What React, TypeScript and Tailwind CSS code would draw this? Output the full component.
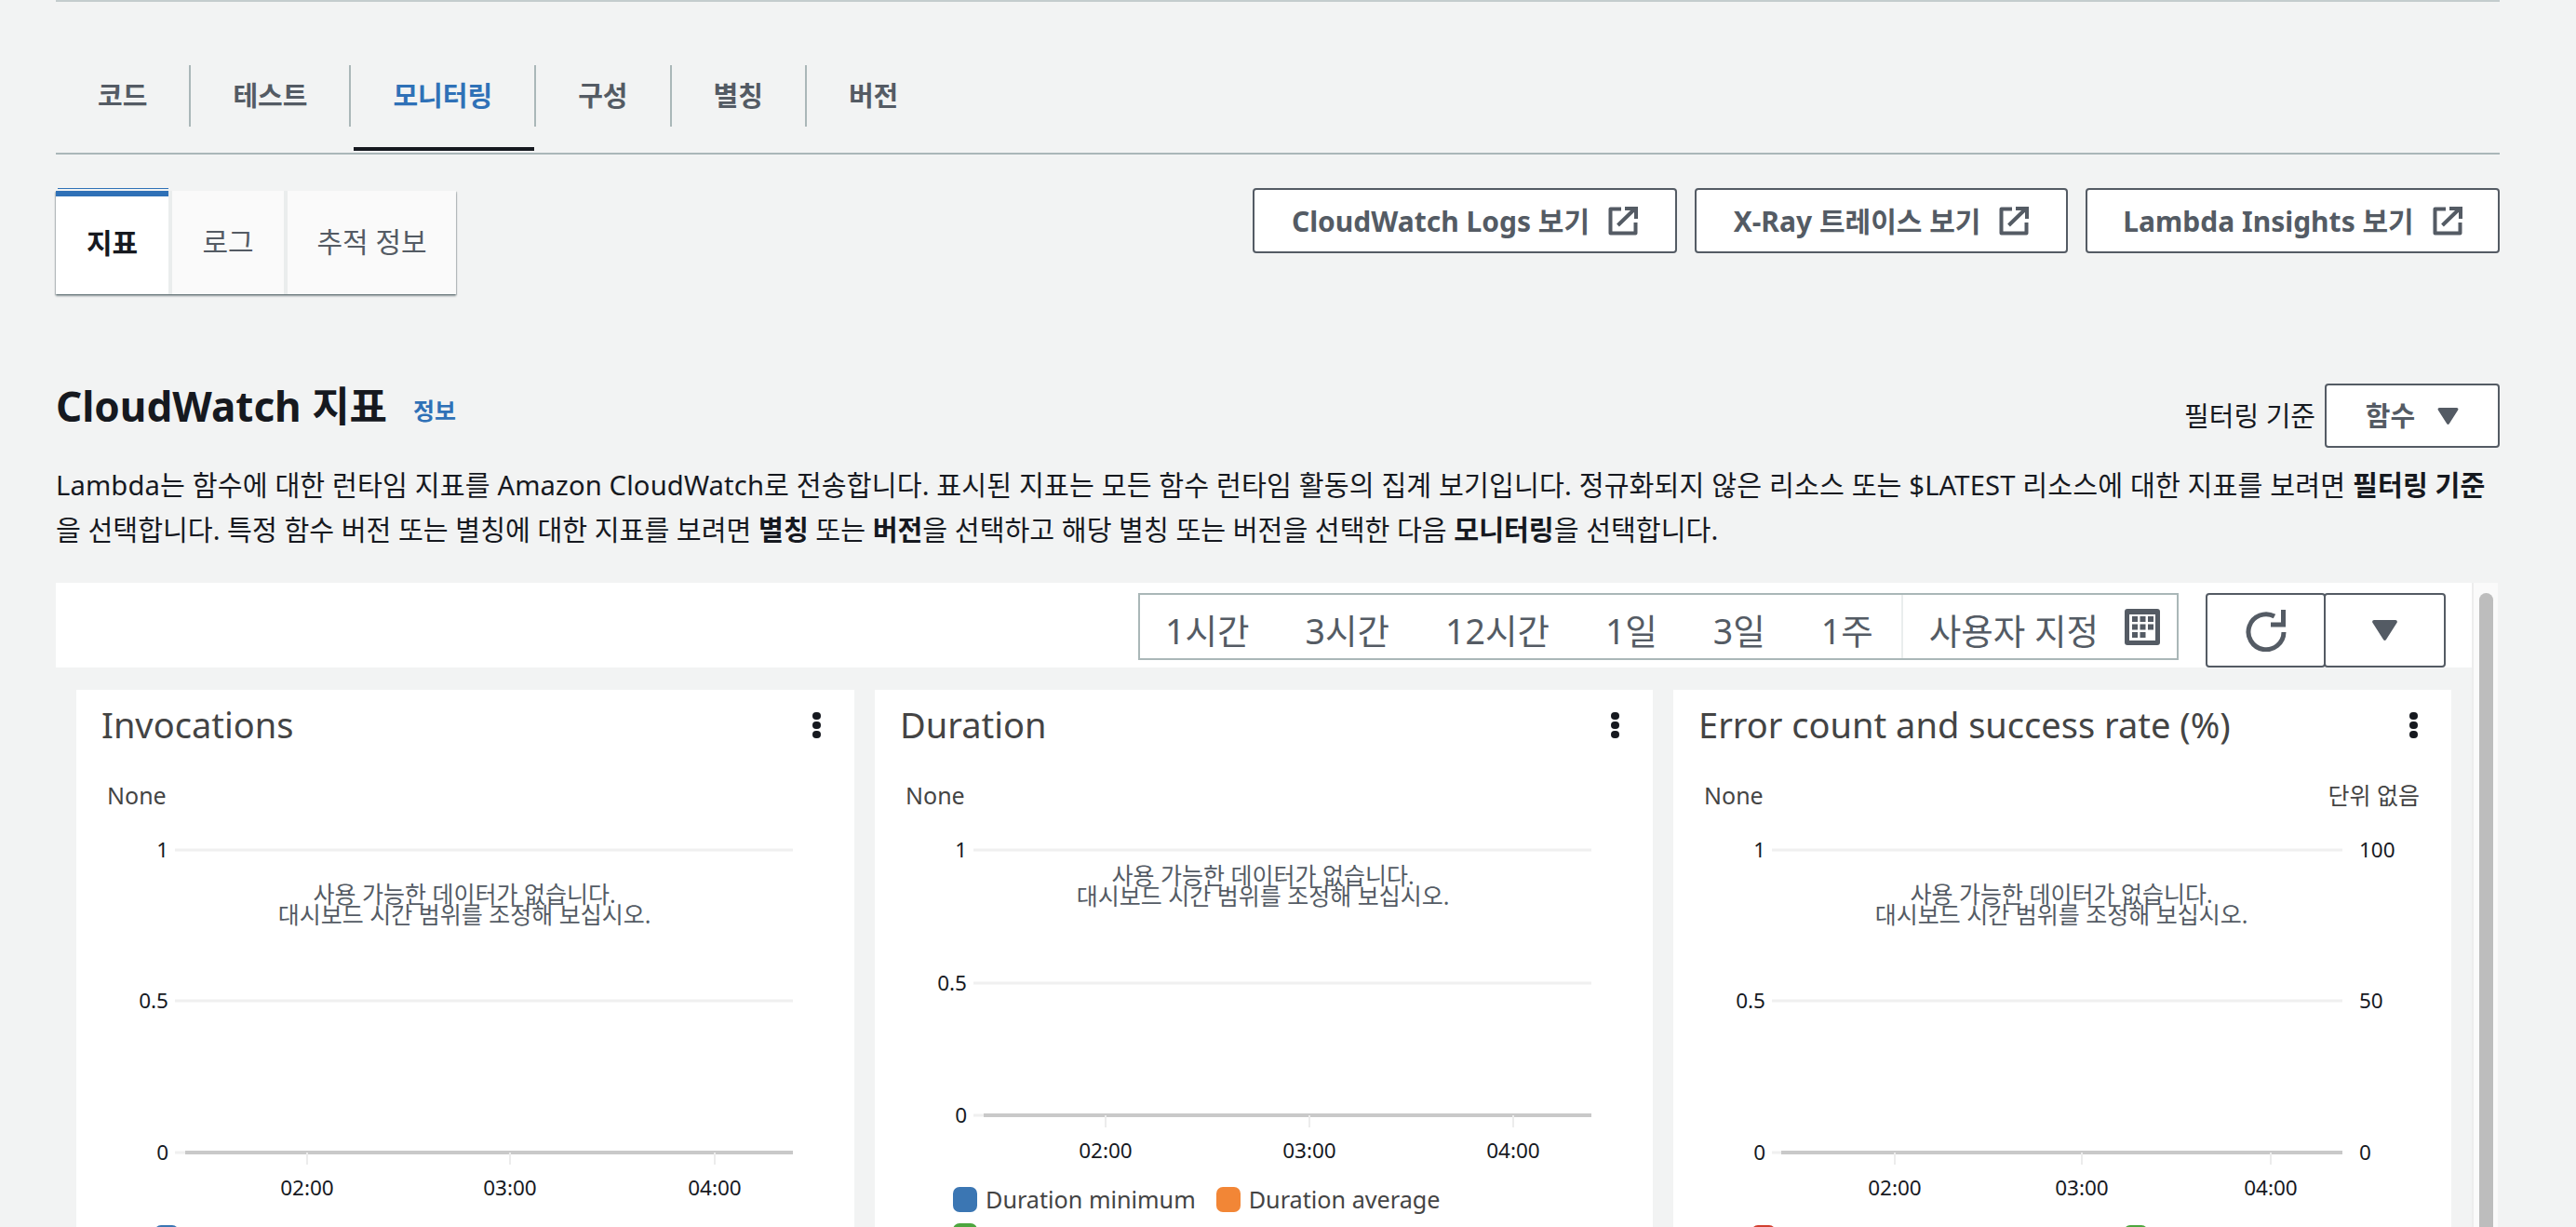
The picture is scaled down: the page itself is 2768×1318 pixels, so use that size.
const tabs = ['코드', '테스트', '모니터링', '구성', '별칭', '버전'];
const ranges = ['1시간', '3시간', '12시간', '1일', '3일', '1주'];
const links = [
  { label: 'CloudWatch Logs 보기', width: 'w-[456px]' },
  { label: 'X-Ray 트레이스 보기', width: 'w-[401px]' },
  { label: 'Lambda Insights 보기', width: 'w-[445px]' },
];

function ExternalIcon() {
  return (
    <svg width="32" height="32" viewBox="0 0 32 32" fill="none" stroke="#545b64" strokeWidth="4" className="shrink-0">
      <path d="M14 3.5H2.5V29.5H29.5V18" strokeLinejoin="round" />
      <path d="M10.5 21L28 4M18 3H30V14" />
    </svg>
  );
}

function Caret({ w, h }: { w: number; h: number }) {
  return (
    <svg width={w} height={h} viewBox="0 0 27 22" fill="#545b64">
      <path d="M2 0H25C26.6 0 27.4 1.8 26.5 3L15 21C14.2 22.3 12.8 22.3 12 21L.5 3C-.4 1.8.4 0 2 0Z" />
    </svg>
  );
}

function RefreshIcon() {
  return (
    <svg width="44" height="45" viewBox="0 0 44 45" fill="none" stroke="#545b64" strokeWidth="5">
      <path d="M41 24A19 19 0 1 1 31 7" />
      <path d="M40.5 0V16H27" />
    </svg>
  );
}

function CalendarIcon() {
  const cells = [
    [8, 8], [16.5, 8], [25, 8],
    [8, 16.5], [16.5, 16.5], [25, 16.5],
    [8, 25], [16.5, 25],
  ];
  return (
    <svg width="38" height="39" viewBox="0 0 38 39" className="ml-[28px] shrink-0">
      <rect width="38" height="39" rx="3" fill="#545b64" />
      <rect x="5" y="6" width="28" height="28" fill="#fff" />
      {cells.map(([x, y]) => (
        <rect key={`${x}-${y}`} x={x} y={y} width="6" height="6" fill="#545b64" />
      ))}
    </svg>
  );
}

type ChartProps = {
  height: number;
  y1: number;
  y05: number;
  y0: number;
  gridRight: number;
  axisLeft: number;
  ticks: number[];
  tickLabelY: number;
  msgY: number;
  right?: boolean;
};

// y 값은 모두 svg 상단 기준
function Chart({ height, y1, y05, y0, gridRight, axisLeft, ticks, tickLabelY, msgY, right }: ChartProps) {
  const times = ['02:00', '03:00', '04:00'];
  return (
    <svg width="836" height={height} className="block" fontSize="22.5">
      {[y1, y05, y0].map((y) => (
        <line key={y} x1="106" x2={gridRight} y1={y} y2={y} stroke="#f0f0f0" strokeWidth="3" />
      ))}
      <line x1={axisLeft} x2={gridRight} y1={y0} y2={y0} stroke="#c9c9c9" strokeWidth="4" />
      {ticks.map((x) => (
        <line key={x} x1={x} x2={x} y1={y0} y2={y0 + 13} stroke="#ececec" strokeWidth="2" />
      ))}
      {[['1', y1], ['0.5', y05], ['0', y0]].map(([t, y]) => (
        <text key={t} x="99" y={Number(y) + 8} textAnchor="end" fill="#16191f">{t}</text>
      ))}
      {right && [['100', y1], ['50', y05], ['0', y0]].map(([t, y]) => (
        <text key={t} x="737" y={Number(y) + 8} fill="#16191f">{t}</text>
      ))}
      {ticks.map((x, i) => (
        <text key={x} x={x} y={tickLabelY + 8} textAnchor="middle" fill="#16191f">{times[i]}</text>
      ))}
      <text x="417" y={msgY + 9} textAnchor="middle" fontSize="25" fill="#545b64">사용 가능한 데이터가 없습니다.</text>
      <text x="417" y={msgY + 31} textAnchor="middle" fontSize="25" fill="#545b64">대시보드 시간 범위를 조정해 보십시오.</text>
    </svg>
  );
}

function Legend({ items, gap }: { items: { color: string; label?: string }[]; gap: string }) {
  return (
    <div className={`flex pl-[84px] text-[25.2px] leading-[27px] text-[#444] ${gap}`}>
      {items.map((it) => (
        <div key={it.color} className="flex items-center">
          <span className="h-[27px] w-[26px] rounded-[7px]" style={{ backgroundColor: it.color }} />
          {it.label && <span className="ml-[9px] whitespace-nowrap">{it.label}</span>}
        </div>
      ))}
    </div>
  );
}

function Card({ title, rightUnit, children }: { title: string; rightUnit?: string; children: React.ReactNode }) {
  return (
    <div className="h-[600px] w-[836px] shrink-0 bg-white">
      <div className="flex h-[76px] items-center justify-between pl-[27px] pr-[36px]">
        <h3 className="-mt-[3px] text-[38px] font-normal leading-none text-[#444]">{title}</h3>
        <div className="flex flex-col gap-[2px]">
          <span className="h-[8px] w-[9px] rounded-full bg-[#16191f]" />
          <span className="h-[8px] w-[9px] rounded-full bg-[#16191f]" />
          <span className="h-[8px] w-[9px] rounded-full bg-[#16191f]" />
        </div>
      </div>
      <div className="mt-[18px] flex h-[40px] items-center justify-between pl-[33px] pr-[34px] text-[25px] text-[#444]">
        <span>None</span>
        {rightUnit && <span>{rightUnit}</span>}
      </div>
      <div className="pt-[1px]">{children}</div>
    </div>
  );
}

export default function App() {
  return (
    <div className="h-[1318px] w-[2768px] overflow-hidden bg-[#f2f3f3] pl-[60px] font-['Noto_Sans','Noto_Sans_CJK_KR',sans-serif] text-[29px] text-[#16191f]">
      <div className="w-[2626px]">
        <div className="h-[2px] bg-[#c4cccd]" />

        {/* 상단 탭 */}
        <div className="flex h-[164px] items-start border-b-2 border-[#aab7b8] pt-[68px]">
          {tabs.map((t, i) => (
            <div key={t} className="relative flex h-[66px] items-center">
              <span className={`px-[45px] font-bold ${t === '모니터링' ? 'text-[#2f71b7]' : 'text-[#545b64]'}`}>{t}</span>
              {i < tabs.length - 1 && <span className="h-full w-[2px] bg-[#aab7b8]" />}
              {t === '모니터링' && <span className="absolute -bottom-[26px] left-[3px] right-[2px] h-[4px] bg-[#16191f]" />}
            </div>
          ))}
        </div>

        {/* 보조 탭, 외부 링크 */}
        <div className="flex items-start justify-between pt-[36px]">
          <div className="relative mt-[3px] flex h-[111px] gap-[4px] bg-[#eaeded] text-[30px] shadow-[0_2px_2px_0_rgba(0,28,36,0.4),1px_1px_1px_0_rgba(0,28,36,0.15),-1px_1px_1px_0_rgba(0,28,36,0.15)]">
            <div className="relative flex w-[121px] items-center justify-center border-t-[6px] border-[#2f71b7] bg-white pb-[6px] font-bold">
              지표
              <span className="absolute -top-[9px] left-[2px] right-0 h-[1px] bg-[#2f71b7]" />
            </div>
            <div className="flex w-[120px] items-center justify-center bg-[#fafafa] pb-[2px] text-[#545b64]">로그</div>
            <div className="flex w-[181px] items-center justify-center bg-[#fafafa] pb-[2px] text-[#545b64]">추적 정보</div>
          </div>
          <div className="flex gap-[19px]">
            {links.map((l) => (
              <button key={l.label} className={`flex h-[70px] items-center justify-center gap-[20px] rounded-[4px] border-2 border-[#545b64] bg-white text-[30px] font-bold text-[#545b64] ${l.width}`}>
                <span className="whitespace-nowrap">{l.label}</span>
                <ExternalIcon />
              </button>
            ))}
          </div>
        </div>

        {/* CloudWatch 지표 헤더 */}
        <div className="mt-[96px] flex items-start justify-between">
          <div className="flex items-center">
            <h2 className="text-[44px] font-bold leading-none">CloudWatch 지표</h2>
            <a className="ml-[28px] mt-[11px] text-[25px] font-bold text-[#2f71b7]">정보</a>
          </div>
          <div className="flex items-center gap-[10px]">
            <span>필터링 기준</span>
            <button className="flex h-[69px] w-[188px] items-center justify-center gap-[24px] rounded-[4px] border-2 border-[#545b64] bg-white font-bold text-[#545b64]">
              함수
              <Caret w={23} h={18} />
            </button>
          </div>
        </div>

        <p className="mt-[16px] whitespace-nowrap text-[29.2px] leading-[48px]">
          <span className="tracking-[0.13px]">
            Lambda는 함수에 대한 런타임 지표를 Amazon CloudWatch로 전송합니다. 표시된 지표는 모든 함수 런타임 활동의 집계 보기입니다. 정규화되지 않은 리소스 또는 $LATEST 리소스에 대한 지표를 보려면 <b>필터링 기준</b>
          </span>
          <br />
          을 선택합니다. 특정 함수 버전 또는 별칭에 대한 지표를 보려면 <b>별칭</b> 또는 <b>버전</b>을 선택하고 해당 별칭 또는 버전을 선택한 다음 <b>모니터링</b>을 선택합니다.
        </p>

        <div className="mt-[33px] flex">
          <div className="w-[2596px] shrink-0">
            {/* 시간 범위 */}
            <div className="flex h-[91px] items-start justify-end bg-white pr-[28px] pt-[11px]">
              <div className="flex h-[72px] items-center border-2 border-[#aab7b8] pt-[10px] text-[37.5px] leading-none text-[#545b64]">
                {ranges.map((r) => (
                  <span key={r} className="px-[30px] first:pl-[27px]">{r}</span>
                ))}
                <div className="-mt-[10px] flex h-[68px] items-center border-l-2 border-[#eaeded] pl-[28px] pr-[18px]">
                  <span className="pt-[10px]">사용자 지정</span>
                  <CalendarIcon />
                </div>
              </div>
              <div className="ml-[29px] flex">
                <button className="flex h-[80px] w-[129px] items-center justify-center rounded-[4px] border-2 border-[#545b64] bg-white">
                  <RefreshIcon />
                </button>
                <button className="-ml-[2px] flex h-[80px] w-[131px] items-center justify-center rounded-[4px] border-2 border-[#545b64] bg-white">
                  <Caret w={27} h={22} />
                </button>
              </div>
            </div>

            {/* 차트 */}
            <div className="mt-[24px] flex gap-[22px] pl-[22px]">
              <Card title="Invocations">
                <Chart height={415} y1={37} y05={199} y0={362} gridRight={770} axisLeft={117} ticks={[248, 466, 686]} tickLabelY={400} msgY={85} />
                <div className="mt-[25px]">
                  <Legend gap="gap-[20px]" items={[{ color: '#3b76b3' }]} />
                </div>
              </Card>
              <Card title="Duration">
                <Chart height={374} y1={37} y05={180} y0={322} gridRight={770} axisLeft={117} ticks={[248, 467, 686]} tickLabelY={360} msgY={65} />
                <div className="mt-[25px] flex flex-col gap-[12px]">
                  <Legend gap="gap-[22px]" items={[{ color: '#3b76b3', label: 'Duration minimum' }, { color: '#f28636', label: 'Duration average' }]} />
                  <Legend gap="gap-[22px]" items={[{ color: '#4da63f' }]} />
                </div>
              </Card>
              <Card title="Error count and success rate (%)" rightUnit="단위 없음">
                <Chart height={415} y1={37} y05={199} y0={362} gridRight={719} axisLeft={116} ticks={[238, 439, 642]} tickLabelY={400} msgY={85} right />
                <div className="mt-[25px]">
                  <Legend gap="gap-[374px]" items={[{ color: '#d13f2f' }, { color: '#4da63f' }]} />
                </div>
              </Card>
            </div>
          </div>

          {/* 스크롤바 */}
          <div className="h-[700px] w-[28px] shrink-0 border-l-2 border-[#ededed] bg-[#fafafa] pl-[6px] pt-[11px]">
            <div className="h-full w-[15px] rounded-full bg-[#bdbdbd]" />
          </div>
        </div>
      </div>
    </div>
  );
}
